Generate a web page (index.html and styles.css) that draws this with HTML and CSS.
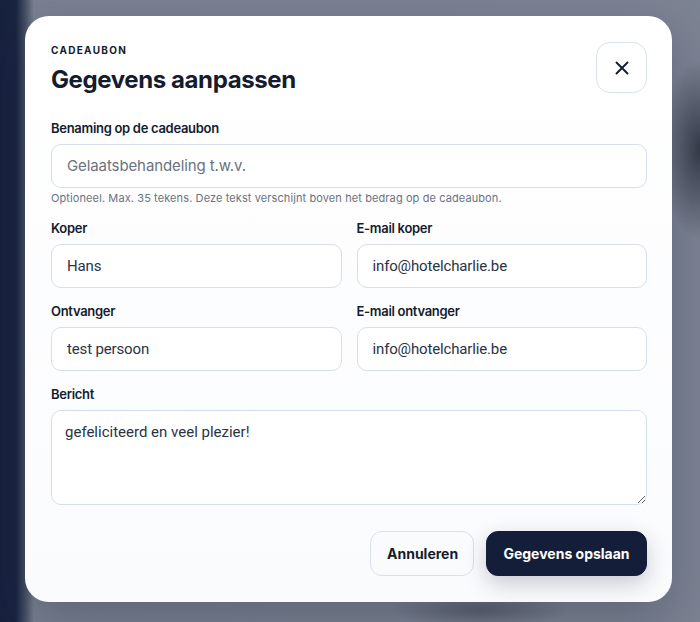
FILE: index.html
```html
<!DOCTYPE html>
<html lang="nl">
<head>
<meta charset="utf-8">
<title>Gegevens aanpassen</title>
<link rel="stylesheet" href="styles.css">
</head>
<body>
<div class="modal">
  <div class="header">
    <div class="titles">
      <div class="eyebrow">CADEAUBON</div>
      <h1 class="title">Gegevens aanpassen</h1>
    </div>
    <button class="close" aria-label="Sluiten">
      <svg width="16" height="16" viewBox="0 0 16 16" fill="none" stroke="#141c2e" stroke-width="1.9" stroke-linecap="round"><path d="M2.5 2.5 13.5 13.5M13.5 2.5 2.5 13.5"/></svg>
    </button>
  </div>
  <form class="form">
    <div class="field">
      <label class="label">Benaming op de cadeaubon</label>
      <input class="input" type="text" placeholder="Gelaatsbehandeling t.w.v.">
      <div class="help">Optioneel. Max. 35 tekens. Deze tekst verschijnt boven het bedrag op de cadeaubon.</div>
    </div>
    <div class="row">
      <div class="field">
        <label class="label">Koper</label>
        <input class="input" type="text" value="Hans">
      </div>
      <div class="field">
        <label class="label">E-mail koper</label>
        <input class="input" type="text" value="info@hotelcharlie.be">
      </div>
    </div>
    <div class="row">
      <div class="field">
        <label class="label">Ontvanger</label>
        <input class="input" type="text" value="test persoon">
      </div>
      <div class="field">
        <label class="label">E-mail ontvanger</label>
        <input class="input" type="text" value="info@hotelcharlie.be">
      </div>
    </div>
    <div class="field">
      <label class="label">Bericht</label>
      <textarea class="textarea">gefeliciteerd en veel plezier!</textarea>
    </div>
    <div class="footer">
      <button type="button" class="btn btn-secondary">Annuleren</button>
      <button type="button" class="btn btn-primary">Gegevens opslaan</button>
    </div>
  </form>
</div>
</body>
</html>
```
FILE: styles.css
```css
* { box-sizing: border-box; }
html, body { margin: 0; height: 100%; }
body {
  font-family: Inter, "Noto Sans", sans-serif;
  color: #141c2e;
  width: 700px;
  height: 622px;
  overflow: hidden;
  padding: 16px 28px 20px 25px;
  background:
    radial-gradient(ellipse 40px 90px at 700px 150px, rgba(40,46,60,0.85), rgba(40,46,60,0) 100%),
    radial-gradient(ellipse 90px 18px at 480px 610px, rgba(70,76,90,0.6), rgba(70,76,90,0) 100%),
    linear-gradient(90deg, #17223f 0px, #1a2542 16px, #4a5368 26px, #7a8191 34px, #7c8393 100%);
}
.modal {
  width: 647px;
  height: 586px;
  border-radius: 24px;
  background: linear-gradient(180deg, #ffffff 0%, #fafbfd 100%);
  box-shadow: 0 20px 50px rgba(15, 23, 42, 0.25);
  padding: 26px 25px 26px 26px;
  display: flex;
  flex-direction: column;
}
.header {
  display: flex;
  justify-content: space-between;
  align-items: flex-start;
}
.titles { padding-top: 1px; }
.eyebrow {
  font-size: 10px;
  font-weight: 700;
  letter-spacing: 1.3px;
  line-height: 14px;
  color: #141c2e;
}
.title {
  margin: 9px 0 0;
  font-size: 24px;
  font-weight: 700;
  line-height: 28px;
  letter-spacing: -0.4px;
  color: #141c2e;
}
.close {
  width: 51px;
  height: 51px;
  border: 1px solid #dbe2ef;
  border-radius: 14px;
  background: #ffffff;
  display: flex;
  align-items: center;
  justify-content: center;
  padding: 0;
  margin-top: 0;
}
.form {
  margin-top: 26px;
  display: flex;
  flex-direction: column;
  gap: 15px;
}
.row {
  display: grid;
  grid-template-columns: 1fr 1fr;
  gap: 15px;
}
.field {
  display: flex;
  flex-direction: column;
}
.label {
  font-size: 13px;
  font-weight: 600;
  line-height: 16px;
  letter-spacing: -0.3px;
  color: #141c2e;
  margin-bottom: 8px;
}
.input, .textarea {
  font-family: Roboto, Inter, sans-serif;
  color: #2a3344;
  border: 1px solid #d6dfec;
  border-radius: 10px;
  background: #ffffff;
  outline: none;
  font-size: 15px;
}
.input {
  height: 44px;
  padding: 0 15px;
  letter-spacing: -0.15px;
}
.input::placeholder {
  font-family: Inter, sans-serif;
  color: #6b7280;
  font-size: 15px;
  letter-spacing: -0.1px;
}
.textarea {
  height: 95px;
  padding: 11px 13px;
  resize: vertical;
  line-height: 20px;
}
.help {
  margin-top: 3px;
  font-size: 11px;
  line-height: 14px;
  letter-spacing: 0.1px;
  color: #6b7280;
}
.footer {
  margin-top: 11px;
  display: flex;
  justify-content: flex-end;
  gap: 12px;
}
.btn {
  height: 45px;
  border-radius: 12px;
  font-family: Inter, "Noto Sans", sans-serif;
  font-size: 14px;
  font-weight: 700;
  padding: 0 16px;
}
.btn-secondary {
  width: 104px;
  background: #fafbfd;
  border: 1px solid #d8e0ee;
  color: #141c2e;
}
.btn-primary {
  width: 161px;
  background: #141e38;
  border: 1px solid #141e38;
  color: #ffffff;
  box-shadow: 0 8px 22px rgba(20, 30, 56, 0.22);
}
```
